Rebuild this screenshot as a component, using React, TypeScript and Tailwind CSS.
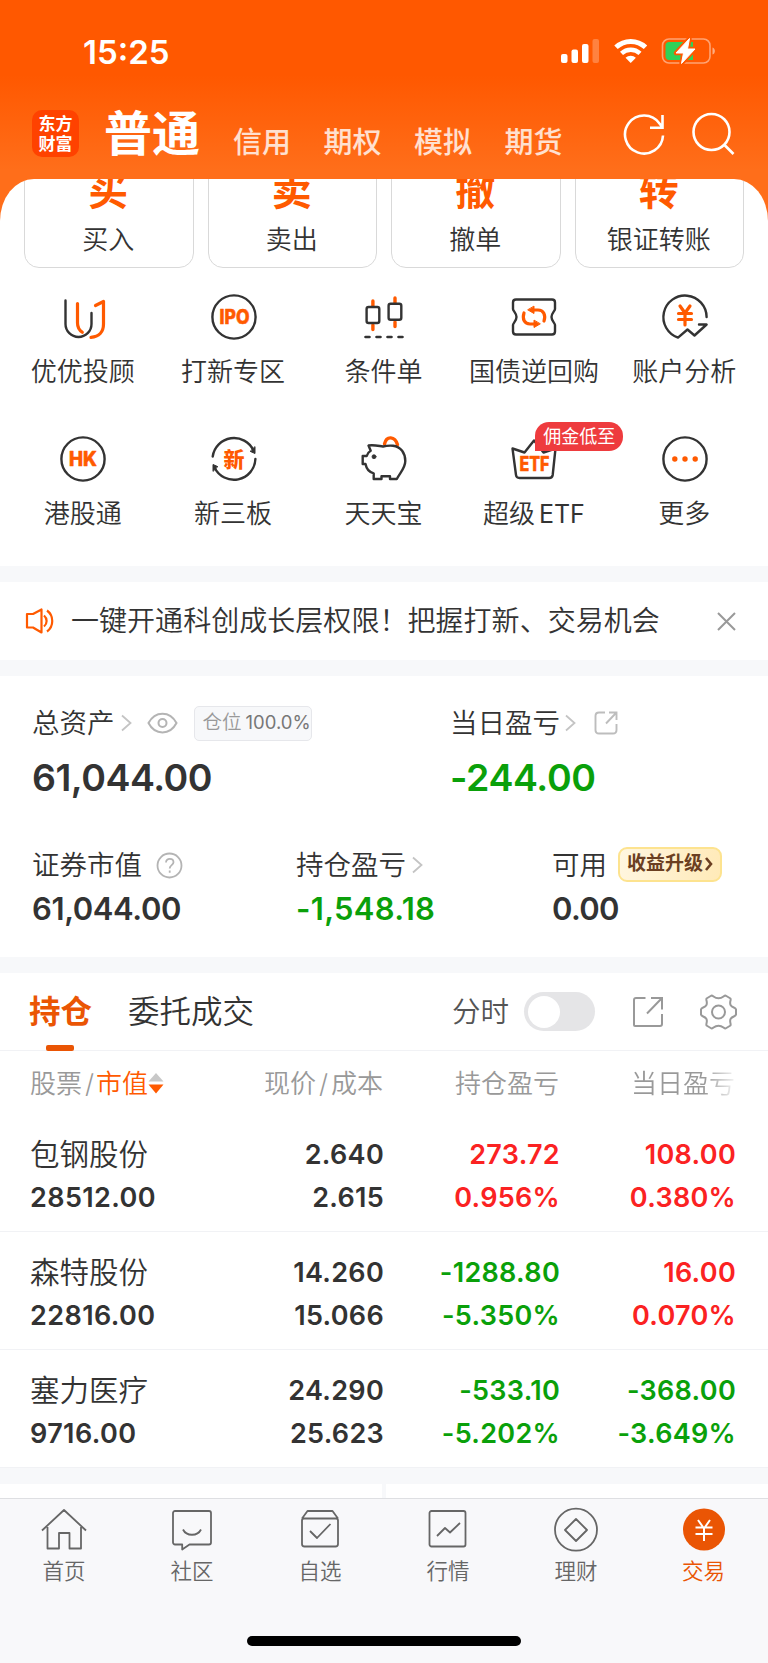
import React from "react";
import { clsx } from "clsx";

const FONT = "font-['Inter','Noto_Sans_CJK_SC',sans-serif]";

const INK = "#333333";
const ORANGE = "#ff5a00";

/* ---------- status bar ---------- */

const StatusIcons = () => (
  <svg width="156" height="32" viewBox="0 0 156 32" fill="none">
    <rect x="0" y="19" width="6.5" height="9" rx="2" fill="#fff" />
    <rect x="10.5" y="14.5" width="6.5" height="13.5" rx="2" fill="#fff" />
    <rect x="21" y="9" width="6.5" height="19" rx="2" fill="#fff" />
    <rect x="31.5" y="4" width="6.5" height="24" rx="2" fill="#fff" fillOpacity="0.25" />
    <path d="M55 12.3a21.500 21.500 0 0 1 29.500 0" stroke="#fff" strokeWidth="5" />
    <path d="M60.500 18.400a13.500 13.500 0 0 1 18.500 0" stroke="#fff" strokeWidth="4.400" />
    <path d="M69.700 28l-5.200-5.300a8 8 0 0 1 10.400 0z" fill="#fff" />
    <rect x="101.500" y="4" width="47.500" height="24" rx="6.500" stroke="#fff" strokeOpacity="0.45" strokeWidth="1.600" />
    <path d="M151.500 12.500c3.200 1 3.200 6 0 7z" fill="#fff" fillOpacity="0.5" />
    <path d="M108 7h24v18h-24c-2 0-3.500-1.500-3.500-3.500v-11c0-2 1.500-3.500 3.500-3.500z" fill="#30d158" />
    <path d="M128.500 3.500l-13.500 14.500h7.500l-2 10.500 13.500-14.500h-7.500z" fill="#fff" stroke="#ff5800" strokeWidth="4.500" strokeLinejoin="round" />
    <path d="M128.500 3.500l-13.500 14.500h7.500l-2 10.500 13.500-14.500h-7.500z" fill="#fff" stroke="#fff" strokeWidth="1" strokeLinejoin="round" />
  </svg>
);

/* ---------- shortcut icons ---------- */

interface IconBoxProps {
  children: React.ReactNode;
}

const IconBox = ({ children }: IconBoxProps) => (
  <svg width="52" height="52" viewBox="0 0 52 52" fill="none" stroke={INK} strokeWidth="2.400" strokeLinecap="round" strokeLinejoin="round">
    {children}
  </svg>
);

const AdvisorIcon = () => (
  <IconBox>
    <path d="M8.500 9.500V33a13 13 0 0 0 26 0V22" />
    <path d="M20.500 12.500V32c0 4 1.500 7 4.800 9.300" stroke={ORANGE} strokeWidth="3.200" />
    <path d="M38.500 14.500l8-4V33c0 8-4.500 12.800-12.500 13.300" stroke={ORANGE} strokeWidth="3.200" />
  </IconBox>
);

const IpoIcon = () => (
  <IconBox>
    <circle cx="26" cy="26" r="21.600" />
    <text x="26.500" y="33" textAnchor="middle" fontSize="19.500" fontWeight="800" textLength="30" lengthAdjust="spacingAndGlyphs" fill={ORANGE} stroke={ORANGE} strokeWidth="0.500" fontFamily="Inter">IPO</text>
  </IconBox>
);

const CandleIcon = () => (
  <IconBox>
    <path d="M14.900 10v5M14.900 34v4.500M37 7v5M37 31v4.500" stroke={ORANGE} strokeWidth="3.400" />
    <rect x="8.600" y="16" width="12.700" height="16" rx="2" />
    <rect x="30.600" y="12.700" width="12.700" height="16" rx="2" />
    <path d="M7.500 46h4M18.500 46h4M29.500 46h4M40.500 46h4" strokeWidth="2.600" />
  </IconBox>
);

const RepoIcon = () => (
  <IconBox>
    <path d="M8 8.500h36c2 0 3 1 3 3v6.500c0 2-3.500 4-3.500 8s3.500 6 3.500 8v6.500c0 2-1 3-3 3H8c-2 0-3-1-3-3V34c0-2 3.500-4 3.500-8S5 20 5 18v-6.500c0-2 1-3 3-3z" />
    <path d="M16 22c-2 6 .5 11 6 11h5M36 30c2-6-.5-11-6-11h-5" stroke={ORANGE} strokeWidth="3.200" />
    <path d="M26 15.500v7l-6-3.500zM26 29.500v7l6-3.500z" fill={ORANGE} stroke={ORANGE} strokeWidth="1" />
  </IconBox>
);

const AnalysisIcon = () => (
  <IconBox>
    <path d="M47.600 26A21.600 21.600 0 1 0 19 46.600L28.500 38.500l7 6L47.600 33.500H40" />
    <path d="M21 15l5 7 5-7M26 22v12M19.500 22.500h13M19.500 28.500h13" stroke={ORANGE} strokeWidth="3.200" />
  </IconBox>
);

const HkIcon = () => (
  <IconBox>
    <circle cx="26" cy="26" r="21.600" />
    <text x="26" y="33" textAnchor="middle" fontSize="19.500" fontWeight="800" textLength="28" lengthAdjust="spacingAndGlyphs" fill={ORANGE} stroke={ORANGE} strokeWidth="0.500" fontFamily="Inter">HK</text>
  </IconBox>
);

const NewBoardIcon = () => (
  <IconBox>
    <path d="M4.700 23.500A21.500 21.500 0 0 1 45.500 17.500M47.400 26A21.500 21.500 0 0 1 6.500 34.500" />
    <path d="M47 14v6.500l-4.500-2zM5 38v-6.500l4.500 2z" fill={INK} strokeWidth="1" />
    <text x="26" y="33.500" textAnchor="middle" fontSize="21" fontWeight="900" fill={ORANGE} stroke="none" fontFamily="Noto Sans CJK SC">新</text>
  </IconBox>
);

const PiggyIcon = () => (
  <IconBox>
    <path d="M26.500 11c2-8.500 10.500-8 13 .8" stroke={ORANGE} strokeWidth="3.400" />
    <path d="M25 13.500c3-.8 6.500-1 10-.8 8 .8 12.300 7.800 12.300 15.300 0 7-4.800 11-8.500 18H32v-2.700h-8.500V46h-7.800v-5.700C12 39.500 8.500 36 7.500 31H4.700v-8h4c.8-2.500 2-4.200 4-5.300l-2.200-5.200c5-.9 9.500.3 14.500 1z" />
    <circle cx="16" cy="23.700" r="2" fill={INK} strokeWidth="0.800" />
  </IconBox>
);

const EtfIcon = () => (
  <IconBox>
    <path d="M4.500 15.500l12 4 9.500-12 9.500 12 12-4-2.800 26.500c-.3 2-1.500 3-3.500 3H11.500c-2 0-3.300-1-3.500-3z" />
    <text x="26.500" y="37.500" textAnchor="middle" fontSize="20" fontWeight="800" textLength="30" lengthAdjust="spacingAndGlyphs" fill={ORANGE} stroke={ORANGE} strokeWidth="0.500" fontFamily="Inter">ETF</text>
  </IconBox>
);

const MoreIcon = () => (
  <IconBox>
    <circle cx="26" cy="26" r="21.600" />
    <g fill={ORANGE} stroke="none">
      <circle cx="15.800" cy="26" r="2.700" />
      <circle cx="26" cy="26" r="2.700" />
      <circle cx="36.200" cy="26" r="2.700" />
    </g>
  </IconBox>
);

interface Shortcut {
  label: string;
  latin?: string;
  icon: React.ReactNode;
  badge?: string;
}

const SHORTCUTS: Shortcut[] = [
  { label: "优优投顾", icon: <AdvisorIcon /> },
  { label: "打新专区", icon: <IpoIcon /> },
  { label: "条件单", icon: <CandleIcon /> },
  { label: "国债逆回购", icon: <RepoIcon /> },
  { label: "账户分析", icon: <AnalysisIcon /> },
  { label: "港股通", icon: <HkIcon /> },
  { label: "新三板", icon: <NewBoardIcon /> },
  { label: "天天宝", icon: <PiggyIcon /> },
  { label: "超级", latin: "ETF", icon: <EtfIcon />, badge: "佣金低至" },
  { label: "更多", icon: <MoreIcon /> },
];

const ACTIONS = [
  { mark: "买", label: "买入" },
  { mark: "卖", label: "卖出" },
  { mark: "撤", label: "撤单" },
  { mark: "转", label: "银证转账" },
];

/* ---------- holdings ---------- */

interface Holding {
  name: string;
  value: string;
  price: string;
  cost: string;
  profit: string;
  profitRate: string;
  day: string;
  dayRate: string;
}

const HOLDINGS: Holding[] = [
  { name: "包钢股份", value: "28512.00", price: "2.640", cost: "2.615", profit: "273.72", profitRate: "0.956%", day: "108.00", dayRate: "0.380%" },
  { name: "森特股份", value: "22816.00", price: "14.260", cost: "15.066", profit: "-1288.80", profitRate: "-5.350%", day: "16.00", dayRate: "0.070%" },
  { name: "塞力医疗", value: "9716.00", price: "24.290", cost: "25.623", profit: "-533.10", profitRate: "-5.202%", day: "-368.00", dayRate: "-3.649%" },
];

const tone = (value: string) => (value.startsWith("-") ? "text-[#0aa00a]" : "text-[#fb2222]");

interface PairProps {
  top: string;
  bottom: string;
  className?: string;
}

const Pair = ({ top, bottom, className }: PairProps) => (
  <div className={clsx("flex w-[176px] flex-col text-right text-[27px] font-semibold leading-[43px] tracking-[0.3px]", className)}>
    <span>{top}</span>
    <span>{bottom}</span>
  </div>
);

const HoldingRow = ({ item }: { item: Holding }) => (
  <div className="flex h-[118px] border-b border-[#f1f2f5] pl-[30px] pr-[32px] pt-[18.500px]">
    <div className="flex flex-1 flex-col leading-[43px]">
      <span className="text-[29.500px] font-[350]">{item.name}</span>
      <span className="text-[27px] font-semibold tracking-[0.4px]">{item.value}</span>
    </div>
    <Pair top={item.price} bottom={item.cost} />
    <Pair top={item.profit} bottom={item.profitRate} className={tone(item.profit)} />
    <Pair top={item.day} bottom={item.dayRate} className={tone(item.day)} />
  </div>
);

const Chevron = () => (
  <svg width="11" height="18" viewBox="0 0 11 18" fill="none" stroke="#c4c4c4" strokeWidth="1.800">
    <path d="M1 1.500l8.500 7.500L1 16.500" />
  </svg>
);

const Band = () => <div className="h-4 shrink-0 bg-[#f7f8fa]" />;

/* ---------- bottom tabs ---------- */

const TAB_ICONS = [
  <path key="home" d="M1 23.500L23 3l22 20.500M6.500 20v21.500H18V26h10.500v15.500H40V20" />,
  <path key="chat" d="M6 4h34c1.100 0 2 .9 2 2v29.500c0 1.100-.9 2-2 2H20.500l-7.300 5V37.500H6c-1.100 0-2-.9-2-2V6c0-1.100.9-2 2-2zM14 22.500c3.500 7 14.500 7 18 0" />,
  <path key="pick" d="M5 11.500L10.500 4h25L41 11.500M7 11.500h32c1.100 0 2 .9 2 2V37c0 1.700-.9 2.500-2.500 2.500h-31C6 39.500 5 38.700 5 37V13.500c0-1.100.9-2 2-2zM13 24l7 7 13.500-14" />,
  <path key="chart" d="M6.500 4h32c1.100 0 2 .9 2 2v31.500c0 1.100-.9 2-2 2h-32c-1.100 0-2-.9-2-2V6c0-1.100.9-2 2-2zM12 29l8-8 5 4.500 10-9.500" />,
  <path key="wealth" d="M23 1.700a21 21 0 1 1 0 42 21 21 0 0 1 0-42zM23 12l11 11-11 11-11-11z" />,
];

const TABS = ["首页", "社区", "自选", "行情", "理财"];

export default function App() {
  return (
    <div className={clsx(FONT, "flex h-[1663px] w-[768px] flex-col overflow-hidden bg-white text-[#333333]")}>
      <div className="bg-[linear-gradient(180deg,#ff5800_0px,#ff5800_75px,#ff6e1a_170px,#ff6e1a_224px)]">
        <div className="flex h-[102px] items-center justify-between pl-[83px] pr-[51px]">
          <span className="pt-[2px] text-[33px] font-semibold leading-none text-white">15:25</span>
          <StatusIcons />
        </div>

        <div className="flex h-[77px] pl-8 pr-[33px]">
          <div className="mt-[8px] flex h-[47px] w-[47px] flex-col items-center justify-center rounded-[10px] bg-[#ff4200] text-[17px] font-bold leading-[20px] text-white">
            <span>东方</span>
            <span>财富</span>
          </div>
          <div className="ml-[25px] mt-[1px] flex leading-[62px] text-white">
            <span className="text-[48px] font-bold">普通</span>
            <div className="ml-[33px] flex gap-[32.500px] pt-[9px] text-[29px] font-medium text-white/80">
              <span>信用</span>
              <span>期权</span>
              <span>模拟</span>
              <span>期货</span>
            </div>
          </div>
          <svg className="ml-auto mt-[9px]" width="112" height="46" viewBox="0 0 112 46" fill="none" stroke="#fff" strokeWidth="2.600">
            <path d="M40 24.500A19 19 0 1 1 36.500 12.500L39.500 16.500M39.500 4v12.700H27" />
            <circle cx="88.500" cy="21" r="18" />
            <path d="M101 33.500l9.500 9.500" />
          </svg>
        </div>

        <div className="h-[89px] overflow-hidden rounded-t-[34px_42px] bg-white px-6">
          <div className="-mt-[40px] flex gap-[14px]">
            {ACTIONS.map((a) => (
              <div key={a.mark} className="flex h-[129px] flex-1 flex-col items-center rounded-[15px] border border-[#d9d9d9] pr-[1px]">
                <span className="mt-[21px] text-[40px] font-bold leading-[60px] text-[#ff5a00]">{a.mark}</span>
                <span className="mt-[3px] text-[26px] font-[350] leading-[32px]">{a.label}</span>
              </div>
            ))}
          </div>
        </div>
      </div>

      <div className="grid h-[298px] shrink-0 grid-cols-5 grid-rows-[142px_142px] px-2 pt-[23px]">
        {SHORTCUTS.map((s) => (
          <div key={s.label} className="relative flex flex-col items-center">
            {s.icon}
            <span className="mr-[1px] mt-[9px] whitespace-nowrap text-[26px] font-[350] leading-[40px]">
              {s.label}
              {s.latin && <span className="ml-[4px] text-[25px] font-normal">{s.latin}</span>}
            </span>
            {s.badge && (
              <span className="absolute left-[76px] top-[-11px] h-[29px] w-[88px] rounded-[14px] rounded-bl-none bg-[#ee3b3e] text-center text-[18px] leading-[30px] text-white">
                {s.badge}
              </span>
            )}
          </div>
        ))}
      </div>

      <Band />
      <div className="flex h-[78px] shrink-0 items-center pl-[25px] pr-[32px]">
        <svg width="29" height="26" viewBox="0 0 29 26" fill="none" stroke={ORANGE} strokeWidth="2.200" strokeLinejoin="round">
          <path d="M2 6h6l8.500-4.500v23L8 19.500H2z" />
          <path d="M19 7.500c3.500 3 3.500 8 0 11M22 2.500c7 5 7 16 0 21" />
        </svg>
        <span className="ml-[17px] text-[28px] font-[350] tracking-[0.04px]">一键开通科创成长层权限！把握打新、交易机会</span>
        <svg className="ml-auto" width="19" height="19" viewBox="0 0 19 19" stroke="#999" strokeWidth="2">
          <path d="M1 1l17 17M18 1L1 18" />
        </svg>
      </div>
      <Band />

      <div className="h-[281px] shrink-0 pl-8">
        <div className="flex pt-[27px]">
          <div className="w-[418px]">
            <div className="flex h-10 items-center">
              <span className="pt-[1px] text-[27.500px] font-[350]">总资产</span>
              <span className="ml-[6px]"><Chevron /></span>
              <svg className="ml-[15px]" width="31" height="22" viewBox="0 0 31 22" fill="none" stroke="#b4b4b4" strokeWidth="2">
                <path d="M1.500 11C8-1.500 23-1.500 29.500 11 23 23.500 8 23.500 1.500 11z" />
                <circle cx="15.500" cy="11" r="4" />
              </svg>
              <div className="ml-[16px] flex h-[35px] w-[118px] items-center whitespace-nowrap rounded-[5px] border border-[#e6e7eb] bg-[#f7f8fa] pl-[8px] text-[19.500px] text-[#777]">
                <span className="font-[350] text-[#999]">仓位</span>
                <span className="ml-[4px] text-[18.500px]">100.0%</span>
              </div>
            </div>
            <div className="mt-[12px] text-[37.500px] font-semibold leading-[46px] tracking-[-0.500px]">61,044.00</div>
          </div>
          <div>
            <div className="flex h-10 items-center">
              <span className="pt-[1px] text-[27.500px] font-[350]">当日盈亏</span>
              <span className="ml-[5px]"><Chevron /></span>
              <svg className="ml-[18px]" width="24" height="24" viewBox="0 0 24 24" fill="none" stroke="#bdbdbd" strokeWidth="1.900">
                <path d="M11 1.500H5c-2.200 0-3.500 1.300-3.500 3.500v14c0 2.200 1.300 3.500 3.500 3.500h14c2.200 0 3.500-1.300 3.500-3.500v-6M15 1.500h7.500V9M22 2L12 12.500" />
              </svg>
            </div>
            <div className="mt-[12px] text-[37.500px] font-semibold leading-[46px] tracking-[-0.400px] text-[#0aa00a]">-244.00</div>
          </div>
        </div>

        <div className="mt-[44px] flex">
          <div className="w-[264px]">
            <div className="flex h-10 items-center">
              <span className="pt-[1px] text-[27.500px] font-[350]">证券市值</span>
              <svg className="ml-[14px]" width="27" height="27" viewBox="0 0 27 27" fill="none" stroke="#b4b4b4" strokeWidth="1.800">
                <circle cx="13.500" cy="13.500" r="12" />
                <path d="M10 10.500c0-5 7.500-4.500 7.500-.3 0 3-3.800 3-3.800 6.300M13.700 18.500v2.200" />
              </svg>
            </div>
            <div className="mt-[4px] text-[31px] font-semibold leading-[40px] tracking-[-0.400px]">61,044.00</div>
          </div>
          <div className="w-[256px]">
            <div className="flex h-10 items-center">
              <span className="pt-[1px] text-[27.500px] font-[350]">持仓盈亏</span>
              <span className="ml-[6px]"><Chevron /></span>
            </div>
            <div className="mt-[4px] text-[31px] font-semibold leading-[40px] tracking-[0.300px] text-[#0aa00a]">-1,548.18</div>
          </div>
          <div>
            <div className="flex h-10 items-center">
              <span className="pt-[1px] text-[27.500px] font-[350]">可用</span>
              <div className="mb-[2px] ml-[11px] flex h-[35px] w-[104px] items-center justify-center gap-[2px] rounded-[9px] border-2 border-[#fde38f] bg-[linear-gradient(100deg,#fff6e0,#ffeab8)] text-[19px] font-bold text-[#6b3f22]">
                收益升级
                <svg width="8" height="14" viewBox="0 0 8 14" fill="none" stroke="#6b3f22" strokeWidth="2.600">
                  <path d="M1 1l5 6-5 6" />
                </svg>
              </div>
            </div>
            <div className="mt-[4px] text-[31px] font-semibold leading-[40px] tracking-[-0.700px]">0.00</div>
          </div>
        </div>
      </div>
      <Band />

      <div className="flex h-[78px] shrink-0 border-b border-[#f1f2f5] pl-[29px] pr-[31px]">
        <div className="relative flex w-[63px] items-center justify-center pt-[1px] text-[31.500px] font-bold text-[#ea5504]">
          持仓
          <span className="absolute bottom-[-1px] left-[17px] h-[6px] w-[28px] rounded-[2px] bg-[#ea5504]" />
        </div>
        <span className="ml-[36px] self-center pt-[1px] text-[31.500px] font-[350]">委托成交</span>
        <div className="ml-auto flex items-center">
          <span className="pt-[1px] text-[28.500px] font-[350] text-[#555]">分时</span>
          <span className="ml-[15px] flex h-[39px] w-[71px] items-center rounded-full bg-[#e5e5e7] pl-[4px]">
            <span className="h-[32px] w-[32px] rounded-full bg-white" />
          </span>
          <svg className="ml-[37px]" width="32" height="32" viewBox="0 0 32 32" fill="none" stroke="#999" strokeWidth="2">
            <path d="M13.500 2H4C2.700 2 2 2.700 2 4v25c0 .7.300 1 1 1h25c1.300 0 2-.7 2-2V18M19 2h11v11.500M30 2L15 17.500" />
          </svg>
          <svg className="ml-[36px]" width="37" height="36" viewBox="0 0 37 36" fill="none" stroke="#999" strokeWidth="2" strokeLinejoin="round">
            <circle cx="18.500" cy="18" r="6.500" />
            <path d="M11.500 1.500c2 0 2.500 2.800 7 2.800s5-2.800 7-2.800l5 3c.8 2-1.400 3.800.2 6.700 1.600 2.800 4.900 2 5.300 4.300v5c-.4 2.300-3.700 1.500-5.300 4.300-1.600 2.900.6 4.700-.2 6.700l-5 3c-2 0-2.500-2.800-7-2.800s-5 2.800-7 2.800l-5-3c-.8-2 1.400-3.800-.2-6.700C4.700 22 1.400 22.800 1 20.500v-5c.4-2.300 3.700-1.500 5.300-4.300 1.600-2.900-.6-4.700.2-6.700z" />
          </svg>
        </div>
      </div>

      <div className="flex h-[63px] shrink-0 items-center pl-[30px] pr-[33px] pt-[2px] text-[26px] font-[350] text-[#999]">
        <div className="flex flex-1 items-center">
          股票<span className="mx-[3px]">/</span>
          <span className="-ml-[1px] text-[#ff5a00]">市值</span>
          <svg className="mb-[1px]" width="16" height="22" viewBox="0 0 16 22">
            <path d="M8 1l7.500 8.500H.5z" fill="#c8c8c8" />
            <path d="M8 21.500L.5 12.500h15z" fill="#ff5a00" />
          </svg>
        </div>
        <div className="w-[176px] text-right">现价<span className="mx-[3px]">/</span>成本</div>
        <div className="w-[176px] text-right">持仓盈亏</div>
        <div className="w-[176px] bg-[linear-gradient(90deg,#999_145px,#fff_180px)] bg-clip-text text-right text-transparent">当日盈亏</div>
      </div>

      <div className="shrink-0">
        {HOLDINGS.map((h) => (
          <HoldingRow key={h.name} item={h} />
        ))}
      </div>
      <Band />
      <div className="flex h-[14px] shrink-0 gap-1 bg-[#f7f8fa]">
        <div className="flex-1 bg-white" />
        <div className="flex-1 bg-white" />
      </div>

      <div className="flex flex-1 flex-col items-center border-t border-[#dedfe2] bg-[#f8f8fa]">
        <div className="flex w-full pt-[8px]">
          {TABS.map((t, i) => (
            <div key={t} className="flex w-[128px] flex-col items-center text-[#666]">
              <svg width="46" height="46" viewBox="0 0 46 46" fill="none" stroke="currentColor" strokeWidth="1.800" strokeLinejoin="round">
                {TAB_ICONS[i]}
              </svg>
              <span className="mt-[2px] text-[21.500px] font-[350] leading-[32px]">{t}</span>
            </div>
          ))}
          <div className="flex w-[127px] flex-col items-center text-[#ea5504]">
            <svg width="46" height="46" viewBox="0 0 46 46" fill="none">
              <circle cx="23" cy="22.500" r="21" fill="#ea5504" />
              <path d="M17 13l6 8.500 6-8.500M23 21.500V34M14.500 20.500h17M14.500 27h17" stroke="#fff" strokeWidth="2" />
            </svg>
            <span className="mt-[2px] text-[21.500px] font-[350] leading-[32px]">交易</span>
          </div>
        </div>
        <div className="mb-[17px] mt-auto h-[10px] w-[274px] rounded-full bg-black" />
      </div>
    </div>
  );
}
